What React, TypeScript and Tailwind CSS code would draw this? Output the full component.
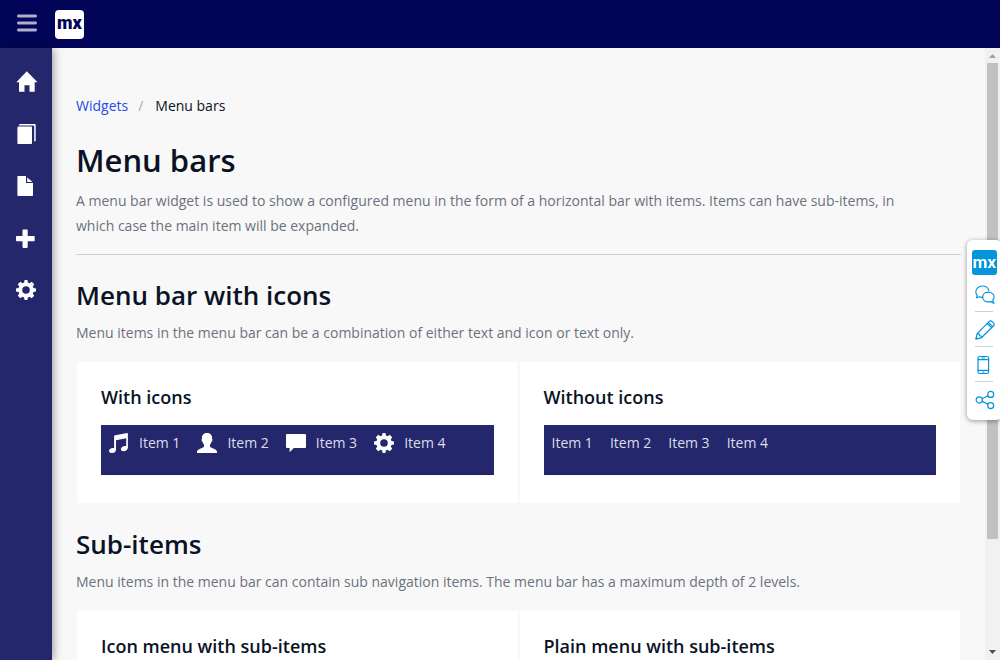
import type { ReactNode } from "react";

const GEAR =
  "M8.6 0h2.8l.5 2.5 1.7.7L15.700 1.800l2.500 2.500-1.400 2.100.7 1.700 2.500.5v2.800l-2.500.5-.7 1.700 1.400 2.100-2.500 2.500-2.100-1.400-1.700.7-.5 2.500H8.600l-.5-2.500-1.700-.7-2.100 1.400-2.500-2.500 1.400-2.100-.7-1.700L0 11.400V8.600l2.500-.5.7-1.700L1.800 4.300l2.500-2.500 2.100 1.400 1.700-.7zM10 6.200a3.800 3.800 0 1 0 0 7.600 3.800 3.800 0 0 0 0-7.600z";

function Icon({ children }: { children: ReactNode }) {
  return (
    <svg viewBox="0 0 20 20" className="size-5 shrink-0 overflow-visible" fill="currentColor" fillRule="evenodd" aria-hidden="true">
      {children}
    </svg>
  );
}

const icons = {
  home: (
    <Icon>
      <path d="M10.800-.8 21.500 10.200H18.700V19.800H13.500V13.200H8.500V19.800H3V10.200H.3z" />
    </Icon>
  ),
  pages: (
    <Icon>
      <path d="M2.300 2.400H15.200a.8.8 0 0 1 .8.8V19.200a.8.8 0 0 1-.8.8H2.200a.8.8 0 0 1-.8-.8V3.400z" />
      <path d="M3.800 0H18.700a1 1 0 0 1 1 1V16.700l-1.500 1V2.400a1 1 0 0 0-1-1H2.400z" />
    </Icon>
  ),
  file: (
    <Icon>
      <path d="M2 0H10V7H17V19.300a.7.700 0 0 1-.7.7H2.100a.7.700 0 0 1-.7-.7V.7A.7.700 0 0 1 2 0zM11.200 1.500 16.600 5.900H11.200z" />
    </Icon>
  ),
  plus: (
    <Icon>
      <path d="M7.300 1.400h3.600a.8.8 0 0 1 .8.8V8h6.200a.8.8 0 0 1 .8.800v3.600a.8.8 0 0 1-.8.800H11.700v5.900a.8.8 0 0 1-.8.800H7.300a.8.8 0 0 1-.8-.8v-5.900H.8a.8.8 0 0 1-.8-.8V8.800A.8.800 0 0 1 .8 8H6.500V2.200a.8.8 0 0 1 .8-.8z" />
    </Icon>
  ),
  gear: (
    <Icon>
      <path d={GEAR} />
    </Icon>
  ),
  music: (
    <Icon>
      <path d="M6.300 2.200 18.300 0c.4 0 .6.200.6.600V14.500c0 1.900-1.500 3.400-3.800 3.700-1.900.2-3.200-.6-3.200-1.900 0-1.700 1.900-3.100 4-3.200.5 0 .9.100 1.300.2V5.200L7 7.200V16.700c0 1.700-1.500 3-3.500 3.300-2 .2-3.500-.6-3.500-1.900 0-1.600 1.700-2.900 3.900-3 .5 0 .9 0 1.200.1V3.300c0-.6.4-1 1.200-1.100z" />
    </Icon>
  ),
  user: (
    <Icon>
      <path d="M10 0c3 0 5.100 1.900 5.100 4.700 0 .5-.1 1-.1 1.300.5.100.5.500.4 1.200-.2.900-.5 1.600-1 1.900-.3 1.100-.8 2-1.400 2.700v1.500c.1.800.7 1.100 2.100 1.700 2.600 1.100 4.300 2 4.800 3.200.1.500.1 1.800.1 1.800H0s0-1.300.1-1.800c.5-1.200 2.200-2.100 4.800-3.200 1.400-.6 2-.9 2.100-1.700v-1.500c-.6-.7-1.100-1.600-1.400-2.700-.5-.3-.8-1-1-1.900-.1-.7-.1-1.100.4-1.200 0-.3-.1-.8-.1-1.300C4.900 1.900 7 0 10 0z" />
    </Icon>
  ),
  comment: (
    <Icon>
      <path d="M1.100 1H18.900A1.100 1.100 0 0 1 20 2.100V13.900A1.100 1.100 0 0 1 18.900 15H7.800L3.600 19.200V15H1.100A1.100 1.100 0 0 1 0 13.900V2.100A1.100 1.100 0 0 1 1.100 1z" />
    </Icon>
  ),
};

const sideLinks = [
  { label: "Home", icon: icons.home },
  { label: "Page templates", icon: icons.pages },
  { label: "Building blocks", icon: icons.file },
  { label: "Widgets", icon: icons.plus },
  { label: "Settings", icon: icons.gear },
];

type MenuItem = { label: string; icon?: ReactNode };

const iconItems: MenuItem[] = [
  { label: "Item 1", icon: icons.music },
  { label: "Item 2", icon: icons.user },
  { label: "Item 3", icon: icons.comment },
  { label: "Item 4", icon: icons.gear },
];

const plainItems: MenuItem[] = iconItems.map(({ label }) => ({ label }));

function MenuBar({ items }: { items: MenuItem[] }) {
  return (
    <nav className="h-[50px] border-b border-[#1f2163] bg-[#24276c]">
      <ul className="flex gap-px">
        {items.map((item) => (
          <li key={item.label}>
            <a href="#" className="flex items-center gap-2.5 px-2 py-2 text-sm text-white">
              {item.icon}
              <span className="text-[#dedee8]">{item.label}</span>
            </a>
          </li>
        ))}
      </ul>
    </nav>
  );
}

function Card({ title, items = [] }: { title: string; items?: MenuItem[] }) {
  return (
    <section className="bg-white px-6 pt-6 pb-7">
      <h3 className="mb-4 text-lg leading-[23px] font-semibold text-[#0a1325]">{title}</h3>
      <MenuBar items={items} />
    </section>
  );
}

function Section({ title, text, children }: { title: string; text: string; children: ReactNode }) {
  return (
    <section className="mt-[22px]">
      <h2 className="text-[26px] leading-9 font-semibold text-[#0a1325]">{title}</h2>
      <p className="mt-[7px] text-sm leading-[25px] text-[#6c717e]">{text}</p>
      <div className="mt-4 grid grid-cols-2 gap-0.5 p-px">{children}</div>
    </section>
  );
}

function ToolIcon({ children }: { children: ReactNode }) {
  return (
    <svg viewBox="0 0 20 20" className="size-5 shrink-0" fill="none" stroke="#0595db" strokeWidth="1.200" strokeLinecap="round" strokeLinejoin="round" aria-hidden="true">
      {children}
    </svg>
  );
}

const tools = [
  {
    label: "Feedback",
    icon: (
      <ToolIcon>
        <path d="M7.500 12.300C6.300 12.400 5.200 12.200 4.300 11.800L1.500 12.800 2.200 10.300C1.200 9.300.7 8.100.8 6.700.9 3.500 3.900 1 7.400 1c3.200 0 5.700 1.700 6.500 4.500" />
        <path d="M13.400 7.200c3.200 0 5.700 2.100 5.700 4.800 0 1.300-.5 2.400-1.400 3.200l1.200 3.100-3.200-1.700c-.7.200-1.500.3-2.300.3-3.200 0-5.700-2.100-5.700-4.900s2.500-4.800 5.700-4.800z" />
      </ToolIcon>
    ),
  },
  {
    label: "Edit",
    icon: (
      <ToolIcon>
        <path d="M.8 19.200 2.200 13.600 14 1.700C15 .7 16.200.7 17.200 1.700L18.400 2.900C19.400 3.900 19.400 5 18.400 6L6.400 17.800zM2.200 13.600l1.900.3.500 1.700 1.500.4.300 1.800M12.300 3.500l4.300 4.300M13.400 2.400l4.200 4.200M.9 19l1.700-.4-1.200-1.200z" />
      </ToolIcon>
    ),
  },
  {
    label: "Device preview",
    icon: (
      <ToolIcon>
        <rect x="3" y="1.500" width="10.600" height="17" rx="1.700" />
        <path d="M3 4.600H13.600M3 15.400H13.600M7 3H9.600M7.700 17H9" />
      </ToolIcon>
    ),
  },
  {
    label: "Share",
    icon: (
      <ToolIcon>
        <circle cx="4.300" cy="10" r="3.100" />
        <circle cx="15.700" cy="4.400" r="3" />
        <circle cx="15.700" cy="15.600" r="3" />
        <path d="M7.100 8.700 13 5.700M7.100 11.400 13 14.300" />
      </ToolIcon>
    ),
  },
];

export default function App() {
  return (
    <div className="flex h-screen flex-col overflow-hidden bg-[#f8f8f8] font-['Open_Sans',sans-serif]">
      <header className="flex h-12 shrink-0 items-center gap-[18px] bg-[#020557] px-[17px]">
        <button type="button" aria-label="Toggle menu" className="pb-0.5">
          <svg viewBox="0 0 20 18" className="h-[18px] w-5" stroke="#aeaecd" strokeWidth="2.800" strokeLinecap="round" aria-hidden="true">
            <path d="M1.400 2H18.600M1.400 9H18.600M1.400 16H18.600" />
          </svg>
        </button>
        <a
          href="#"
          className="flex size-[29px] items-center justify-center rounded bg-white pb-0.5 font-['Roboto',sans-serif] text-[18px] leading-none font-black text-[#020557]"
        >
          mx
        </a>
      </header>

      <div className="flex min-h-0 flex-1">
        <nav className="z-10 w-[52px] shrink-0 bg-[#24276c] pt-2 text-white shadow-[2px_0_8px_rgba(0,0,0,0.35)]">
          <ul>
            {sideLinks.map((link) => (
              <li key={link.label}>
                <a href="#" aria-label={link.label} className="flex h-13 items-center px-4">
                  {link.icon}
                </a>
              </li>
            ))}
          </ul>
        </nav>

        <main className="min-w-0 flex-1 overflow-y-auto px-6 pt-12 [scrollbar-width:none]">
          <nav aria-label="Breadcrumb">
            <ol className="flex text-sm">
              <li>
                <a href="#" className="text-[#264ae5]">
                  Widgets
                </a>
              </li>
              <li aria-hidden="true" className="pr-2 pl-2.5 text-[#a9acb3]">
                /
              </li>
              <li className="pl-1 text-[#0a1325]">Menu bars</li>
            </ol>
          </nav>
          <div className="border-b border-[#ced0d3] pt-6 pb-4">
            <h1 className="text-[31px] leading-10 font-semibold text-[#0a1325]">Menu bars</h1>
            <p className="mt-2 pr-7 text-sm leading-[25px] text-[#6c717e]">
              A menu bar widget is used to show a configured menu in the form of a horizontal bar with items. Items can
              have sub-items, in which case the main item will be expanded.
            </p>
          </div>

          <Section
            title="Menu bar with icons"
            text="Menu items in the menu bar can be a combination of either text and icon or text only."
          >
            <Card title="With icons" items={iconItems} />
            <Card title="Without icons" items={plainItems} />
          </Section>

          <Section
            title="Sub-items"
            text="Menu items in the menu bar can contain sub navigation items. The menu bar has a maximum depth of 2 levels."
          >
            <Card title="Icon menu with sub-items" />
            <Card title="Plain menu with sub-items" />
          </Section>
        </main>

        <div aria-hidden="true" className="flex w-[15px] shrink-0 flex-col items-center bg-[#f1f1f1]">
          <svg viewBox="0 0 7 4" className="mt-1.5 mb-[5px] h-1 w-[7px] shrink-0" fill="#a0a0a0">
            <path d="M3.500 0 7 4H0z" />
          </svg>
          <div className="min-h-0 w-full flex-1 px-0.5">
            <div className="h-[82%] bg-[#c1c1c1]" />
          </div>
          <svg viewBox="0 0 7 4" className="my-1.5 h-1 w-[7px] shrink-0" fill="#505050">
            <path d="M3.500 4 7 0H0z" />
          </svg>
        </div>
      </div>

      <aside className="fixed top-60 -right-0.5 z-20 flex w-[35px] flex-col rounded-md bg-white pt-2.5 pb-1 pl-[5px] shadow-[0_1px_5px_rgba(0,0,0,0.4)]">
        <a
          href="#"
          className="flex size-[25px] items-center justify-center rounded-[3px] bg-[#0595db] font-['Roboto',sans-serif] text-[17px] leading-none font-bold text-white"
        >
          mx
        </a>
        <ul className="mt-0.5 w-[21px] divide-y divide-[#ced0d3] pl-[3px]">
          {tools.map((tool) => (
            <li key={tool.label}>
              <button type="button" aria-label={tool.label} className="flex h-[34px] items-center pt-0.5">
                {tool.icon}
              </button>
            </li>
          ))}
        </ul>
      </aside>
    </div>
  );
}
